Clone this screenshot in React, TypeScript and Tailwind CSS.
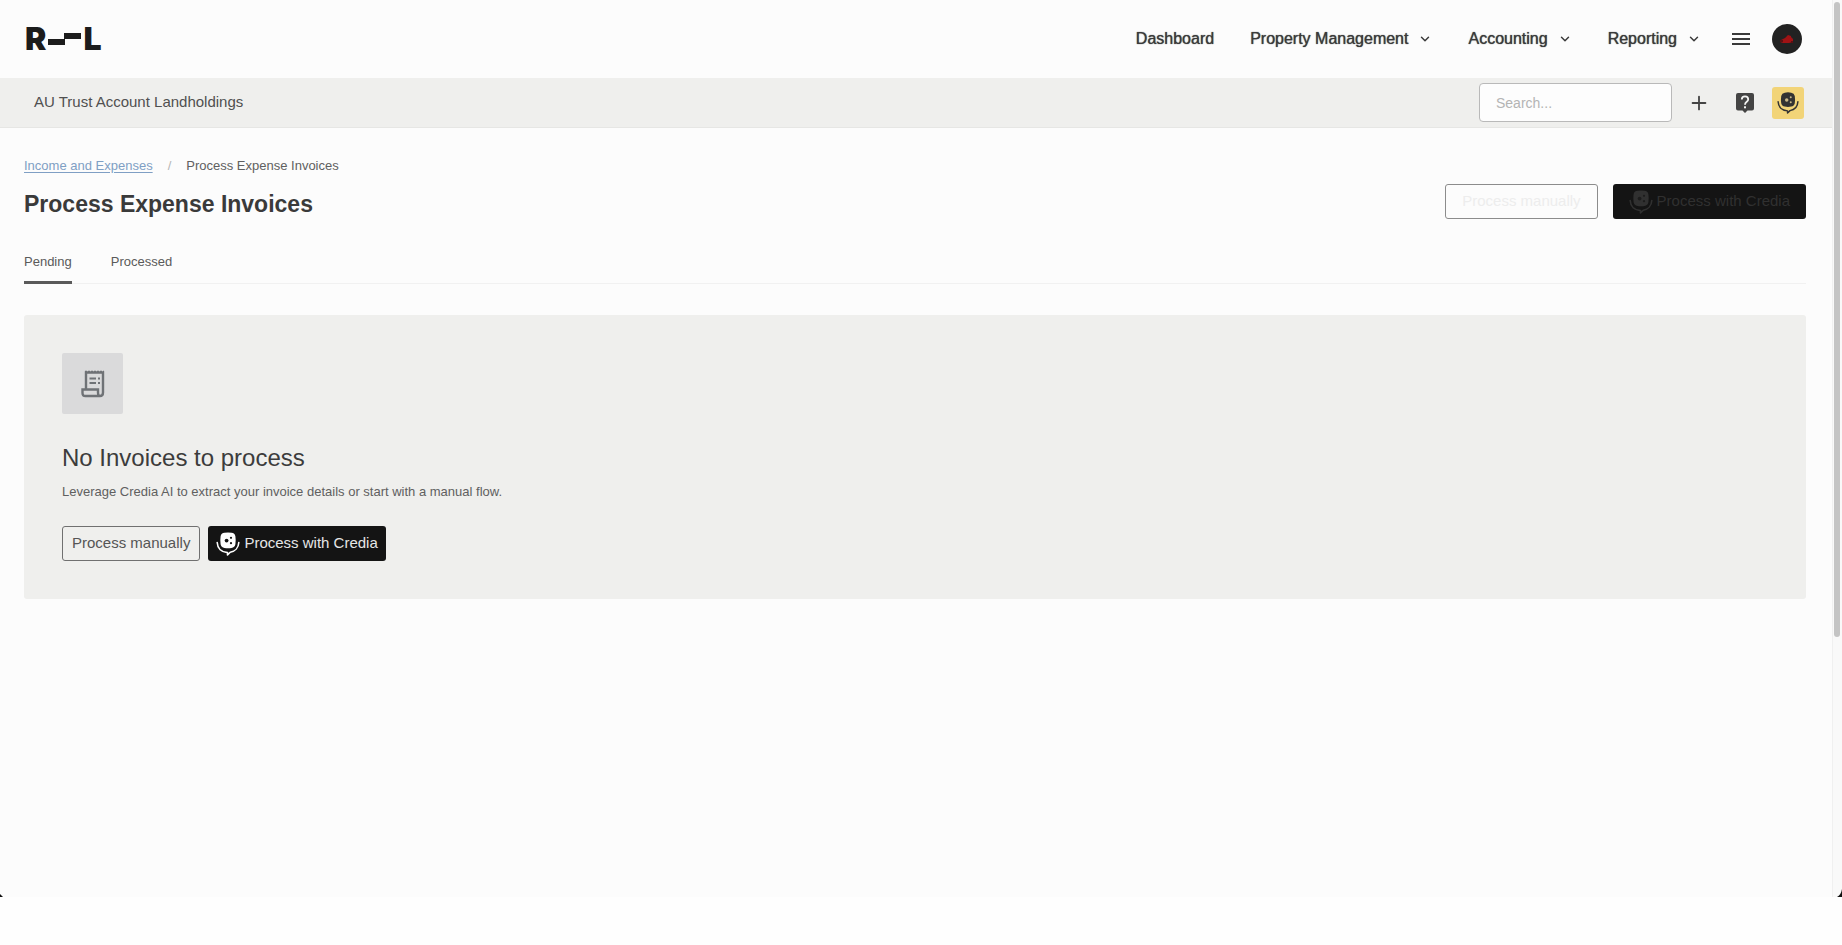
import React from 'react';
import { ChevronDown, Plus } from 'lucide-react';

const menus = ['Property Management', 'Accounting', 'Reporting'];

const Logo: React.FC = () => (
  <a
    href="#home"
    aria-label="Home"
    className="flex items-center font-['Inter',sans-serif] text-[32px] leading-8 font-black text-[#1c1c1c]"
  >
    <span>R</span>
    <svg width="37" height="24" viewBox="0 0 37 24" fill="currentColor" aria-hidden="true">
      <rect x="2" y="12" width="17" height="6" />
      <rect x="18" y="6" width="17" height="6" />
    </svg>
    <span>L</span>
  </a>
);

// Credia mascot: a dotted head sitting in a speech-bubble arc
const CrediaIcon: React.FC<{ className?: string; dots: string }> = ({ className, dots }) => (
  <svg viewBox="0 0 24 24" className={className} fill="none" aria-hidden="true">
    <path
      d="M1.200 10.500C1.500 16.500 5.500 20.300 11.500 20.600V23L14.200 20.300C19 19.500 22.500 15.800 22.800 10.500"
      stroke="currentColor"
      strokeWidth="1.600"
      strokeLinecap="round"
      strokeLinejoin="round"
    />
    <path
      d="M8.500 .8Q12 0 15.500 .8Q18.800 1.200 19.400 4.300Q20 8.300 19.400 12.300Q18.800 15.500 15.500 15.900Q12 16.700 8.500 15.900Q5.200 15.500 4.600 12.300Q4 8.300 4.600 4.300Q5.200 1.200 8.500 .8Z"
      fill="currentColor"
    />
    <g fill={dots}>
      <circle cx="10.600" cy="8.600" r="1.900" />
      <circle cx="15" cy="5.800" r="1.100" />
      <circle cx="15" cy="11.200" r="1.100" />
    </g>
  </svg>
);

const HelpIcon: React.FC = () => (
  <svg width="18" height="20" viewBox="0 0 18 20" aria-hidden="true">
    <path d="M2 0H16Q18 0 18 2V15.500Q18 17.500 16 17.500H11.500L9 20L6.500 17.500H2Q0 17.500 0 15.500V2Q0 0 2 0Z" fill="#444" />
    <path d="M5.800 6.500Q5.800 3.300 9 3.300Q12.200 3.300 12.200 6.200Q12.200 7.600 10.700 8.800Q9 10.200 9 11.700" fill="none" stroke="#f4f4f3" strokeWidth="1.800" />
    <rect x="8" y="13.300" width="2" height="2" fill="#f4f4f3" />
  </svg>
);

const ReceiptIcon: React.FC = () => (
  <svg width="24" height="28" viewBox="0 0 24 28" fill="none" stroke="#6f7276" strokeWidth="2.400" aria-hidden="true">
    <path d="M5 19V2.500H22V22.500Q22 26 19 26H4.500Q1.500 26 1.500 23V19.500H17V22.500Q17 26 19 26" />
    <path d="M8.500 8.500H15M8.500 13H15M17 8.500H19M17 13H19" strokeWidth="2" />
    <path d="M4 1.500H23" strokeDasharray="2 1" strokeWidth="1.500" />
  </svg>
);

const Header: React.FC = () => (
  <header className="flex h-[78px] items-center justify-between pr-[30px] pl-[25px]">
    <Logo />
    <div className="flex items-center">
      <nav className="flex items-center gap-9 text-base text-[#3a3a3a]">
        <a href="#dashboard" className="text-shadow-[0_0_1px_currentColor]">Dashboard</a>
        {menus.map((menu) => (
          <button key={menu} type="button" className="flex items-center gap-2.5 text-shadow-[0_0_1px_currentColor]">
            {menu}
            <ChevronDown className="size-3.5" strokeWidth={2.5} />
          </button>
        ))}
      </nav>
      <button type="button" aria-label="Menu" className="mr-[22px] ml-[31px]">
        <svg width="18" height="14" viewBox="0 0 18 14" stroke="#3a3a3a" strokeWidth="2" aria-hidden="true">
          <path d="M0 2H18M0 7H18M0 12H18" />
        </svg>
      </button>
      <button type="button" aria-label="Profile" className="flex size-[30px] items-center justify-center rounded-full bg-[#222]">
        <svg width="16" height="12" viewBox="0 0 16 12" aria-hidden="true">
          <path d="M2 7L6 5L9 2L12 3V4L14 6V9L10 10H4L1 9Z" fill="#a01214" />
          <path d="M1 7H4V9H1ZM12 8H14V10H12Z" fill="#5c1012" />
        </svg>
      </button>
    </div>
  </header>
);

const AccountBar: React.FC = () => (
  <div className="flex h-[50px] items-center justify-between border-b border-[#e6e6e4] bg-[#efefed] pr-7 pl-[34px]">
    <span className="text-[15px] text-[#505050]">AU Trust Account Landholdings</span>
    <div className="flex items-center">
      <input
        type="search"
        aria-label="Search"
        placeholder="Search..."
        className="mr-4 h-[39px] w-[193px] rounded-[4px] border border-[#b9b9b9] bg-[#fdfdfd] px-4 text-sm placeholder:text-[#b4b4b4]"
      />
      <button type="button" aria-label="Add" className="mr-[26px]">
        <Plus className="size-[22px] text-[#444]" strokeWidth={2} />
      </button>
      <button type="button" aria-label="Help" className="mr-[18px]">
        <HelpIcon />
      </button>
      <button type="button" aria-label="Credia" className="flex size-8 items-center justify-center rounded-[3px] bg-[#f2d478] text-[#333]">
        <CrediaIcon className="size-[22px]" dots="#c9b98a" />
      </button>
    </div>
  </div>
);

const EmptyState: React.FC = () => (
  <section className="rounded-[3px] bg-[#efefed] px-[38px] py-[38px]">
    <div className="flex size-[61px] items-center justify-center rounded-[2px] bg-[#dadadb]">
      <ReceiptIcon />
    </div>
    <h2 className="mt-7 text-2xl text-[#3c3c3c]">No Invoices to process</h2>
    <p className="mt-2 text-[13px] leading-5 text-[#606060]">
      Leverage Credia AI to extract your invoice details or start with a manual flow.
    </p>
    <div className="mt-6 flex gap-2 text-[15px]">
      <button type="button" className="h-[35px] rounded-[3px] border border-[#707070] px-[9px] text-[#555]">
        Process manually
      </button>
      <button type="button" className="flex h-[35px] items-center gap-1 rounded-[3px] bg-[#141414] px-2 text-[#e6e6e6]">
        <CrediaIcon className="size-6 text-white" dots="#141414" />
        Process with Credia
      </button>
    </div>
  </section>
);

export default function App() {
  return (
    <div className="flex min-h-screen flex-col bg-[#fefefe] font-['Liberation_Sans',Arial,sans-serif]">
      <div className="relative flex flex-1 bg-[#fcfcfc]">
        <div className="min-w-0 flex-1">
          <Header />
          <AccountBar />
          <main className="pt-7 pr-[26px] pl-6">
            <nav aria-label="Breadcrumb" className="flex gap-[15px] text-[13px] leading-5">
              <a href="#income" className="text-[#7f9fc4] underline underline-offset-2">Income and Expenses</a>
              <span className="text-[#b5b5b5]">/</span>
              <span className="text-[#606060]">Process Expense Invoices</span>
            </nav>
            <div className="mt-2 flex items-start justify-between">
              <h1 className="text-[23px] leading-10 font-bold text-[#3a3a3a]">Process Expense Invoices</h1>
              <div className="flex gap-[15px] text-[15px]">
                <button type="button" disabled className="h-[35px] rounded-[3px] border border-[#8c8c8c] px-4 text-[#ededed]">
                  Process manually
                </button>
                <button type="button" disabled className="flex h-[35px] items-center gap-1 rounded-[3px] bg-[#141414] px-4 text-[#303030]">
                  <CrediaIcon className="size-6" dots="#1c1c1c" />
                  Process with Credia
                </button>
              </div>
            </div>
            <div role="tablist" className="mt-7 flex gap-[39px] border-b border-[#f1f1f1] text-[13px] leading-5 text-[#5a5a5a]">
              <button type="button" role="tab" aria-selected="true" className="-mb-px border-b-[3px] border-[#5a5a5a] pb-[9px]">
                Pending
              </button>
              <button type="button" role="tab" aria-selected="false" className="pb-[11px]">
                Processed
              </button>
            </div>
            <div className="mt-[31px]">
              <EmptyState />
            </div>
          </main>
        </div>

        {/* Scroll track */}
        <div className="w-2.5 border-l border-[#f0f0f0] bg-[#f9f9f9] pt-0.5">
          <div className="ml-px h-[71%] w-1.5 rounded-full bg-[#c4c4c4]" />
        </div>

        {/* Rounded window corners */}
        <svg className="absolute bottom-0 left-0" width="3" height="3" aria-hidden="true">
          <path d="M0 0L3 3H0Z" fill="#111" />
        </svg>
        <svg className="absolute right-0 bottom-0" width="5" height="8" viewBox="0 0 5 8" aria-hidden="true">
          <path d="M5 0V8H0Q4 6 5 0Z" fill="#111" />
        </svg>
      </div>
      <div className="h-12" />
    </div>
  );
}
